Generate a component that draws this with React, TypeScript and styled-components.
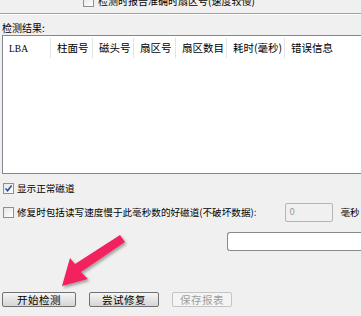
import * as React from 'react';
import styled, { createGlobalStyle } from 'styled-components';

const GlobalStyle = createGlobalStyle`
  html, body {
    margin: 0;
    padding: 0;
    background: #f0f0f0;
    overflow: hidden;
  }
  body {
    font-family: "Noto Sans CJK SC", "DejaVu Sans", sans-serif;
    font-size: 9.6px;
    color: #000000;
  }
`;

const Page = styled.div`
  position: relative;
  display: flex;
  flex-direction: column;
  width: 361px;
  height: 316px;
  overflow: hidden;
  background: #f0f0f0;
`;

const TopOption = styled.div`
  display: flex;
  align-items: center;
  gap: 4px;
  height: 14px;
  margin-top: -6px;
  padding-left: 83px;
  line-height: 14px;
  white-space: nowrap;
  font-size: 10px;
`;

const Separator = styled.div`
  flex: 0 0 auto;
  height: 0;
  margin-top: 5px;
  border-top: 1px solid #a0a0a0;
  border-bottom: 1px solid #ffffff;
`;

const SectionLabel = styled.div`
  margin: 6px 0 0 2px;
  height: 14px;
  line-height: 14px;
  font-size: 10px;
`;

const Table = styled.div`
  flex: 0 0 auto;
  box-sizing: border-box;
  margin: 0 0 0 2px;
  height: 139px;
  border: 1px solid #828790;
  border-right: none;
  background: #ffffff;
`;

const HeaderRow = styled.div`
  display: flex;
  height: 24px;
  align-items: center;
`;

const HeaderCell = styled.div<{ $w: number }>`
  flex: 0 0 ${p => p.$w}px;
  height: 20px;
  line-height: 20px;
  padding-left: 6px;
  box-sizing: border-box;
  border-right: 1px solid #e4e4e4;
  white-space: nowrap;
  overflow: hidden;
  font-size: 10.5px;
  &:last-child {
    flex: 1 1 auto;
    border-right: none;
  }
`;

const Latin = styled.span`
  font-family: "Liberation Serif", serif;
  font-size: 9.5px;
`;

const CheckRow = styled.div<{ $top: number }>`
  flex: 0 0 auto;
  display: flex;
  align-items: center;
  gap: 3px;
  margin: ${p => p.$top}px 0 0 3px;
  height: 16px;
  white-space: nowrap;
`;

const Box = styled.span`
  display: inline-flex;
  align-items: center;
  justify-content: center;
  box-sizing: border-box;
  width: 11px;
  height: 11px;
  border: 1px solid #8f8f8f;
  background: linear-gradient(135deg, #e6e6e6, #ffffff);
  flex: 0 0 auto;
`;

const NumInput = styled.div<{ $gap: number }>`
  box-sizing: border-box;
  width: 48px;
  height: 19px;
  margin-left: ${p => p.$gap}px;
  border: 1px solid #b5b5b5;
  border-radius: 2px;
  background: #f0f0f0;
  color: #9a9a9a;
  font-size: 9.5px;
  line-height: 15px;
  padding-left: 3px;
  flex: 0 0 auto;
`;

const Unit = styled.span`
  margin-left: 4px;
`;

const FieldRow = styled.div`
  flex: 0 0 auto;
  display: flex;
  margin-top: 12px;
  padding-left: 227px;
`;

const TextField = styled.div`
  box-sizing: border-box;
  width: 140px;
  height: 19px;
  border: 1px solid #8a8a8a;
  border-right: none;
  border-radius: 3px 0 0 3px;
  background: #ffffff;
`;

const ButtonRow = styled.div`
  flex: 0 0 auto;
  display: flex;
  gap: 13px;
  margin: 41px 0 0 2px;
`;

const Button = styled.div<{ $w: number; $disabled?: boolean }>`
  box-sizing: border-box;
  width: ${p => p.$w}px;
  height: 15px;
  line-height: 13px;
  text-align: center;
  border: 1px solid ${p => (p.$disabled ? '#c4c4c4' : '#707070')};
  border-radius: 2px;
  background: ${p =>
    p.$disabled ? '#f4f4f4' : 'linear-gradient(#f6f6f6, #e4e4e4 50%, #d6d6d6)'};
  color: ${p => (p.$disabled ? '#a0a0a0' : '#000000')};
  font-size: 10.5px;
  letter-spacing: 0.5px;
`;

const Arrow = styled.svg`
  position: absolute;
  left: 0;
  top: 0;
  pointer-events: none;
`;

const columns: [string, number][] = [
  ['LBA', 48],
  ['柱面号', 42],
  ['磁头号', 41],
  ['扇区号', 42],
  ['扇区数目', 51],
  ['耗时(毫秒)', 58],
  ['错误信息', 0],
];

const CheckMark = () => (
  <svg width="9" height="9" viewBox="0 0 9 9">
    <path d="M1.5 4.5 L3.6 6.8 L7.6 1.6" fill="none" stroke="#2a4f9a" strokeWidth="1.6" />
  </svg>
);

export default function App() {
  return (
    <Page>
      <GlobalStyle />
      <TopOption>
        <Box />
        <span>检测时报告准确时扇区号(速度较慢)</span>
      </TopOption>
      <Separator />
      <SectionLabel>检测结果:</SectionLabel>
      <Table>
        <HeaderRow>
          {columns.map(([label, w]) => (
            <HeaderCell key={label} $w={w}>
              {label === 'LBA' ? <Latin>LBA</Latin> : label}
            </HeaderCell>
          ))}
        </HeaderRow>
      </Table>
      <CheckRow $top={6}>
        <Box>
          <CheckMark />
        </Box>
        <span>显示正常磁道</span>
      </CheckRow>
      <CheckRow $top={8}>
        <Box />
        <span>修复时包括读写速度慢于此毫秒数的好磁道(不破坏数据):</span>
        <NumInput $gap={26}>0</NumInput>
        <Unit>毫秒</Unit>
      </CheckRow>
      <FieldRow>
        <TextField />
      </FieldRow>
      <ButtonRow>
        <Button $w={74}>开始检测</Button>
        <Button $w={70}>尝试修复</Button>
        <Button $w={60} $disabled>保存报表</Button>
      </ButtonRow>
      <Arrow width="361" height="316" viewBox="0 0 361 316">
        <defs>
          <filter id="sh" x="-20%" y="-20%" width="140%" height="140%">
            <feDropShadow dx="1.5" dy="2" stdDeviation="1.5" floodColor="#000" floodOpacity="0.35" />
          </filter>
        </defs>
        <path
          d="M62 286 L70 258 L75 264 L120 235 L125 242 L81 272 L88 279 Z"
          fill="#f2215f"
          filter="url(#sh)"
        />
      </Arrow>
    </Page>
  );
}
